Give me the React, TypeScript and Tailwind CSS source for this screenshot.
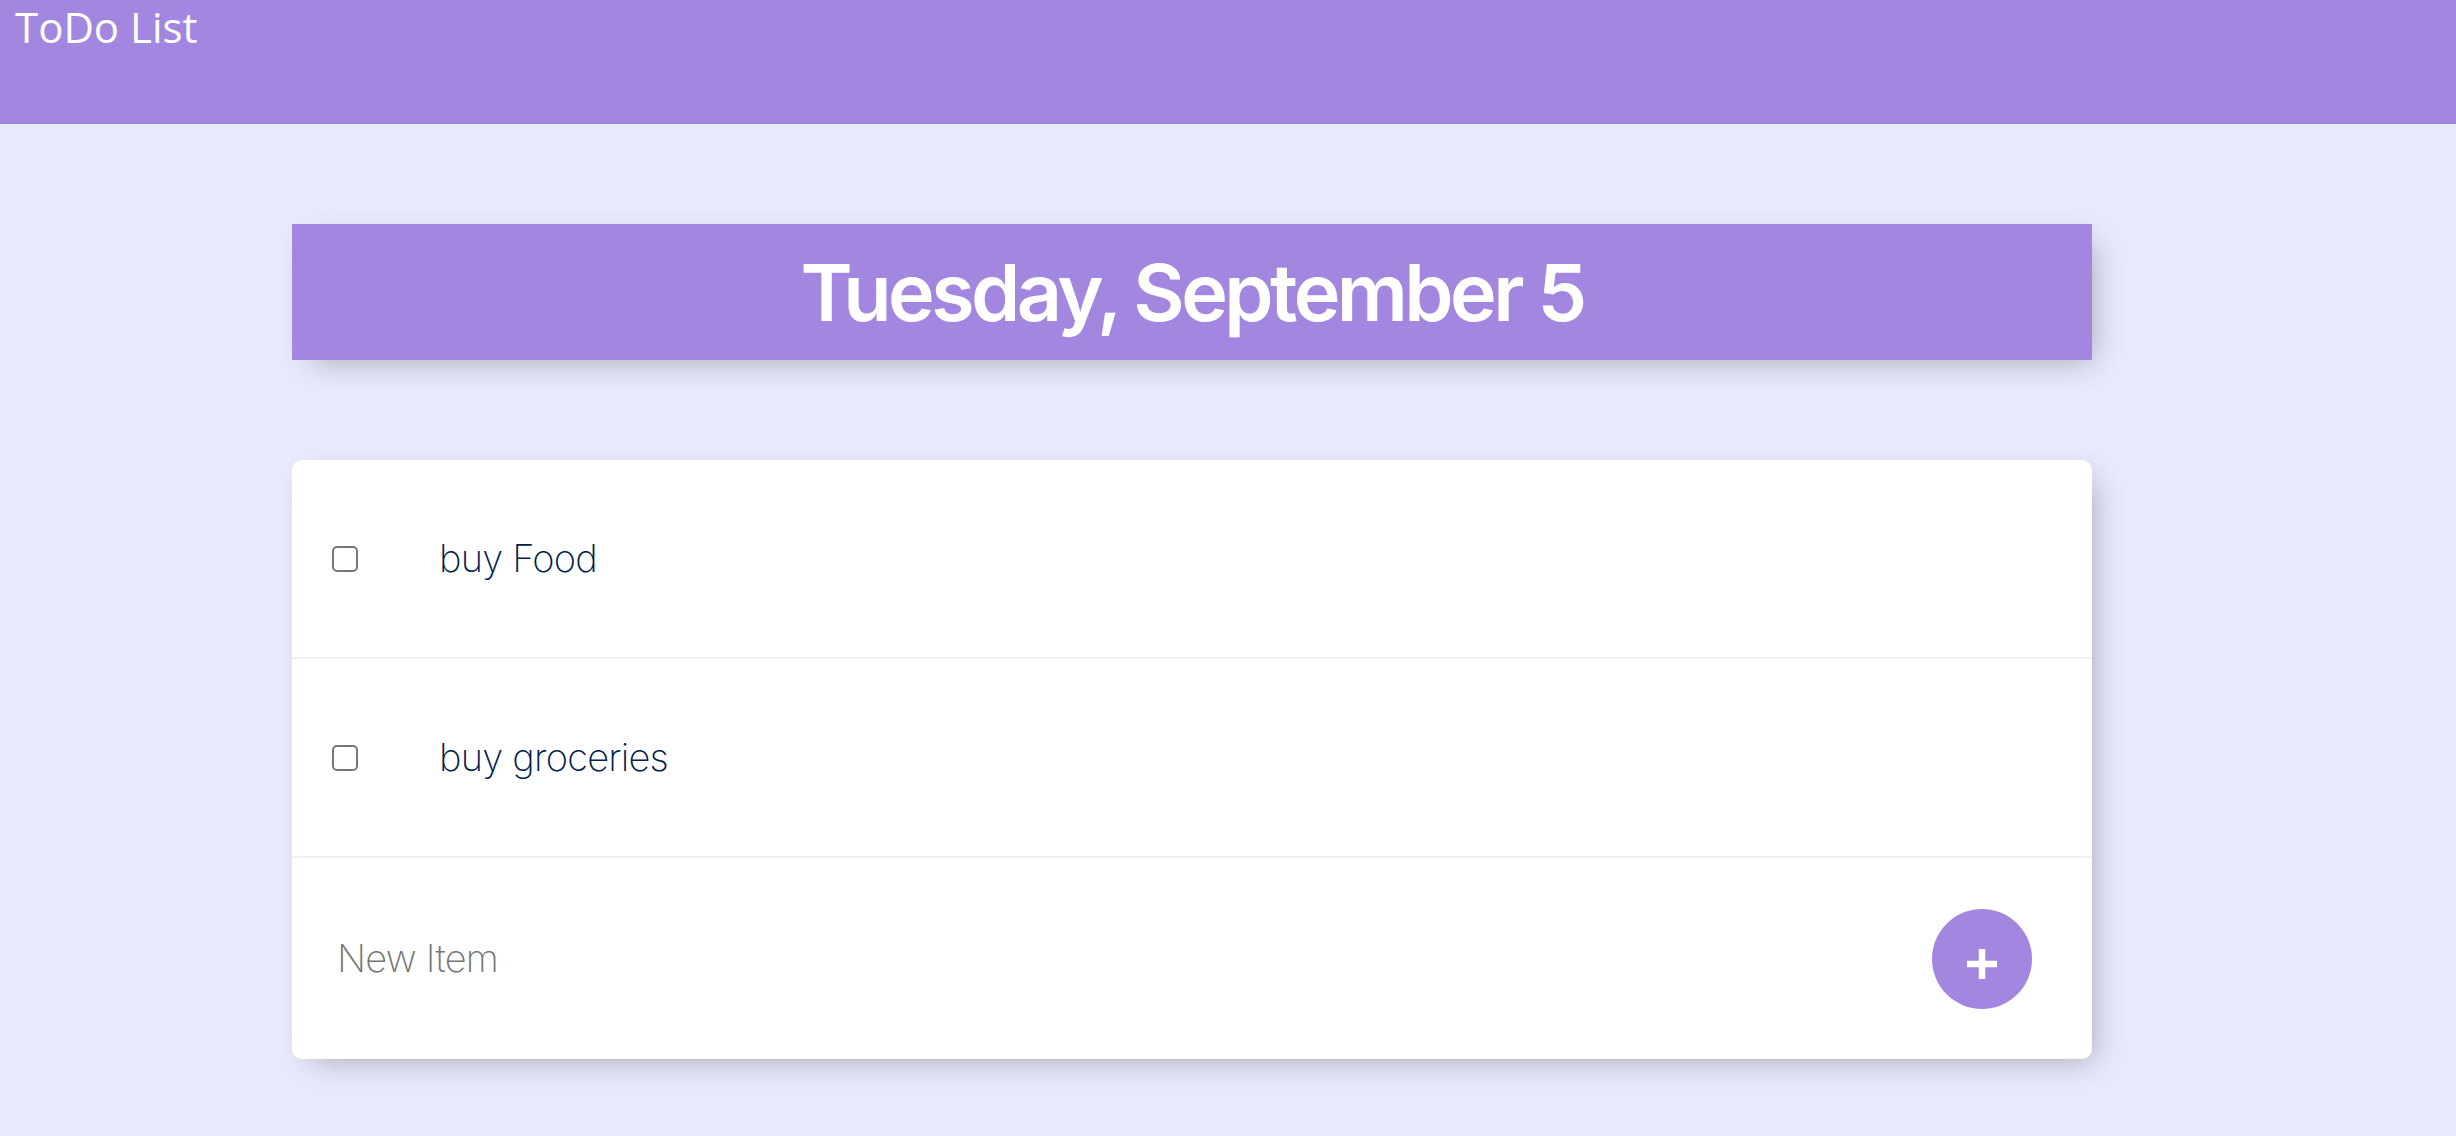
const items = ['buy Food', 'buy groceries'];

export default function App() {
  return (
    <div className="min-h-screen bg-[#e8eafc] font-['Inter',sans-serif]">
      {/* Top bar */}
      <header className="h-[124px] bg-[#a286e0] pl-[15px] pt-[1px]">
        <h1 className="font-['Open_Sans',sans-serif] text-[42px] leading-[52px] text-white">
          ToDo List
        </h1>
      </header>

      {/* Date heading */}
      <div className="ml-[292px] mt-[100px] flex h-[136px] w-[1800px] items-center justify-center bg-[#a286e0] shadow-[10px_10px_30px_-10px_rgba(0,0,0,0.3)]">
        <h2 className="text-[79px] font-semibold leading-none tracking-[-0.045em] text-white">
          Tuesday, September 5
        </h2>
      </div>

      {/* List */}
      <div className="ml-[292px] mt-[100px] w-[1800px] overflow-hidden rounded-[10px] bg-white shadow-[10px_10px_30px_-10px_rgba(0,0,0,0.3)]">
        {items.map((item) => (
          <div key={item} className="flex h-[199px] items-center border-b-2 border-[#f1f1f1]">
            <input
              type="checkbox"
              className="ml-[40px] h-[26px] w-[26px] shrink-0 appearance-none rounded-[5px] border-2 border-[#767676] bg-white"
            />
            <p className="ml-[81px] text-[38px] font-extralight tracking-[-0.02em] text-[#00204a]">
              {item}
            </p>
          </div>
        ))}

        <form className="flex h-[201px] items-center pl-[45px] pr-[60px]">
          <input
            type="text"
            placeholder="New Item"
            className="flex-1 bg-transparent text-[38px] font-extralight tracking-[-0.02em] text-[#00204a] outline-none placeholder:text-[#757575]"
          />
          <button
            type="button"
            className="flex h-[100px] w-[100px] items-center justify-center rounded-full bg-[#a286e0] pt-[10px]"
          >
            <svg width="30" height="30" viewBox="0 0 30 30">
              <path d="M15 0v30M0 15h30" stroke="white" strokeWidth="6.5" />
            </svg>
          </button>
        </form>
      </div>
    </div>
  );
}
